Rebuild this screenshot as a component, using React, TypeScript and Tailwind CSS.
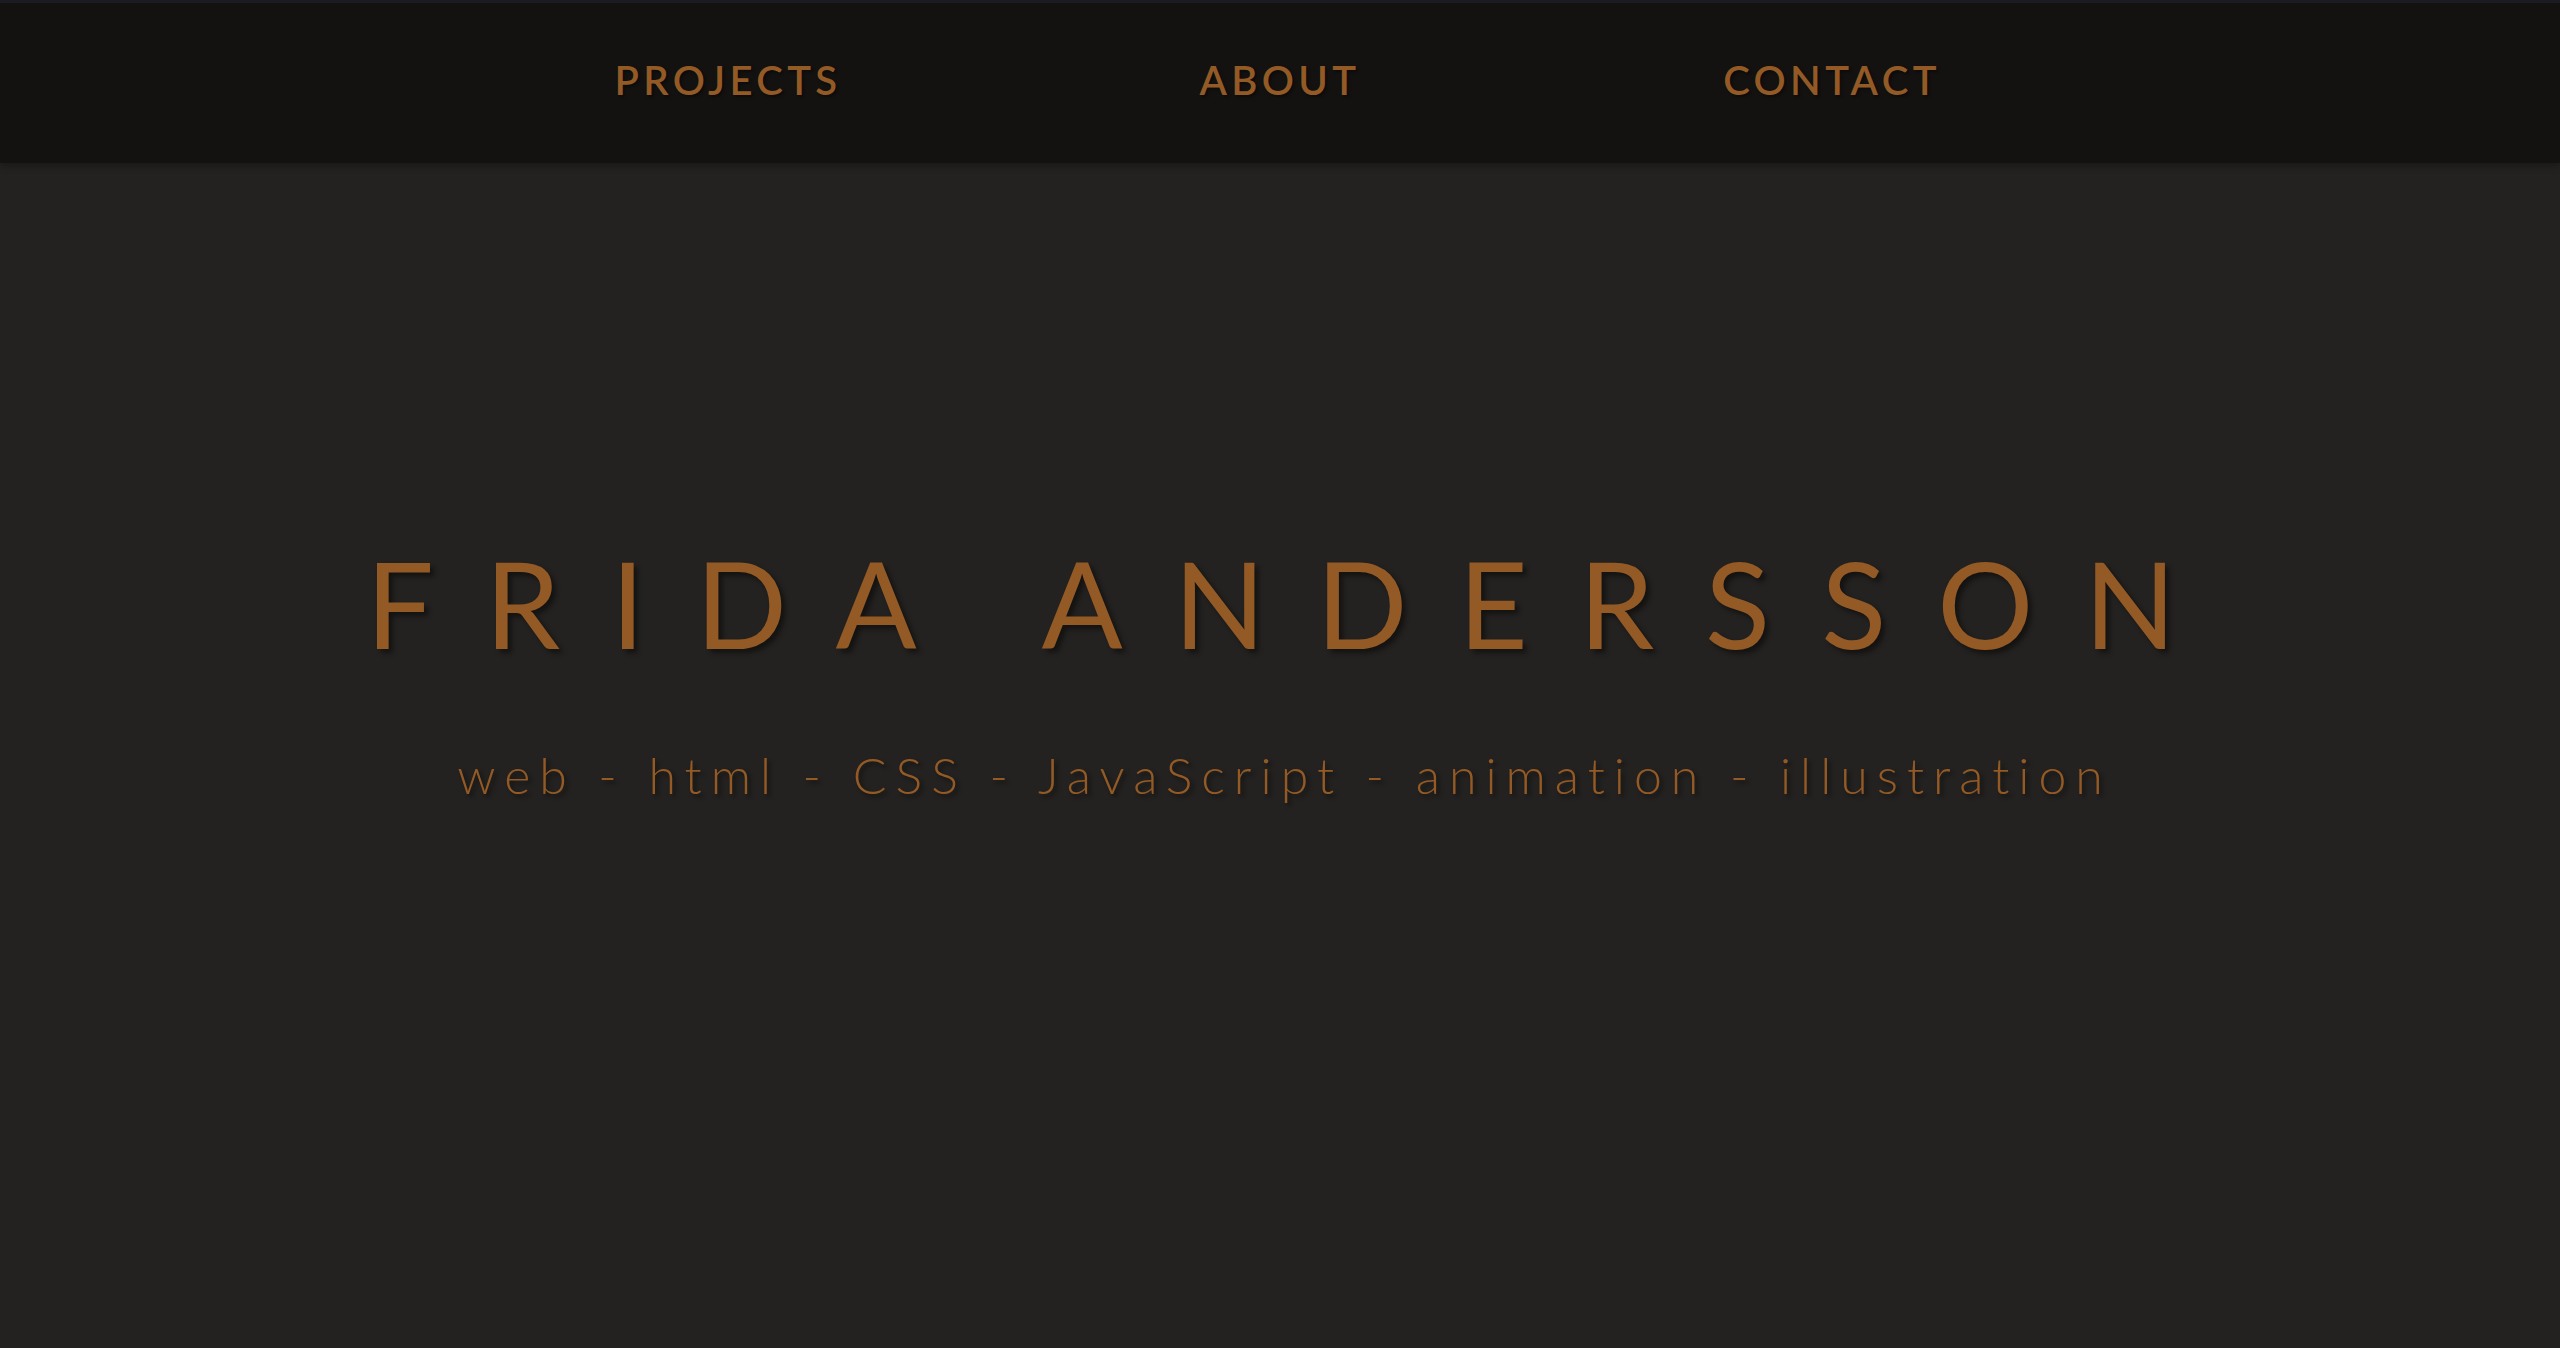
const links = ['PROJECTS', 'ABOUT', 'CONTACT'];

const App = () => {
  return (
    <div className="min-h-screen bg-[#232220] font-['Lato',sans-serif] text-[#935a26]">
      {/* Nav */}
      <nav className="h-[163px] bg-[#131211] border-t-[3px] border-[#1b1b22] flex justify-center items-center shadow-[0_4px_6px_rgba(0,0,0,0.25)]">
        <ul className="grid grid-cols-3 w-[1656px] -mt-[6px]">
          {links.map((l) => (
            <li key={l} className="text-center">
              <a href="#" className="text-[40px] font-semibold tracking-[0.11em] [text-shadow:2px_2px_3px_rgba(0,0,0,0.4)]">
                {l}
              </a>
            </li>
          ))}
        </ul>
      </nav>

      {/* Hero */}
      <header className="flex flex-col items-center pt-[380px]">
        <h1 className="text-[120px] leading-none font-normal tracking-[51px] pl-[33px] [text-shadow:4px_4px_5px_rgba(0,0,0,0.45)]">
          FRIDA ANDERSSON
        </h1>
        <p className="mt-[87px] text-[50px] leading-none font-light tracking-[9px] pl-[9px] [text-shadow:3px_3px_4px_rgba(0,0,0,0.45)]">
          web - html - CSS - JavaScript - animation - illustration
        </p>
      </header>
    </div>
  );
};

export default App;
